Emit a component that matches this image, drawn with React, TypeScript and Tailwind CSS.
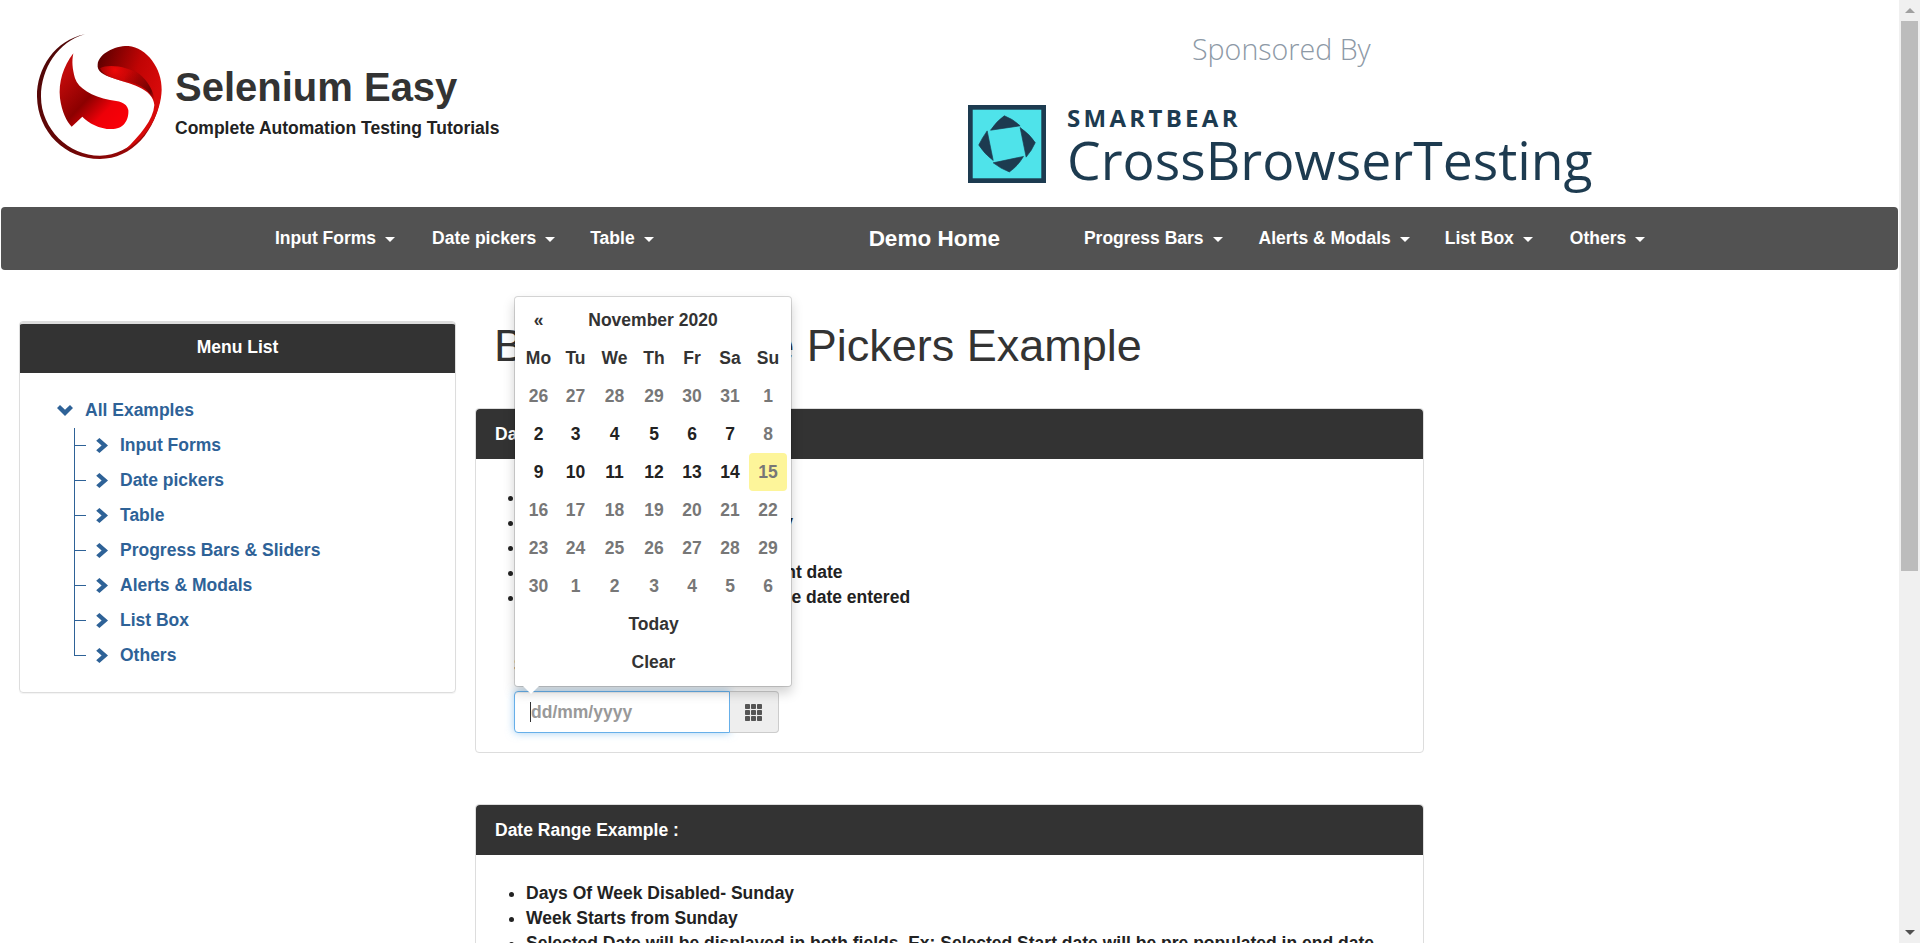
const navLeft = [
  { label: "Input Forms", cls: "ml-[259px]" },
  { label: "Date pickers", cls: "ml-[7px]" },
  { label: "Table", cls: "ml-[5px]" },
];
const navRight = [
  { label: "Progress Bars", cls: "ml-[54px]" },
  { label: "Alerts & Modals", cls: "ml-[6px]" },
  { label: "List Box", cls: "ml-[5px]" },
  { label: "Others", cls: "ml-[7px]" },
];
const tree = [
  { label: "Input Forms", cls: "ml-[1px]" },
  { label: "Date pickers", cls: "ml-[1px]" },
  { label: "Table", cls: "ml-[2px]" },
  { label: "Progress Bars & Sliders", cls: "ml-[1px]" },
  { label: "Alerts & Modals", cls: "" },
  { label: "List Box", cls: "ml-[1px]" },
  { label: "Others", cls: "ml-[1px]" },
];
const dow = ["Mo", "Tu", "We", "Th", "Fr", "Sa", "Su"];
const days: { d: number; on?: boolean; today?: boolean }[] = [
  ...[26, 27, 28, 29, 30, 31, 1].map((d) => ({ d })),
  ...[2, 3, 4, 5, 6, 7].map((d) => ({ d, on: true })),
  { d: 8 },
  ...[9, 10, 11, 12, 13, 14].map((d) => ({ d, on: true })),
  { d: 15, today: true },
  ...[16, 17, 18, 19, 20, 21, 22, 23, 24, 25, 26, 27, 28, 29, 30, 1, 2, 3, 4, 5, 6].map((d) => ({ d })),
];

function Caret() {
  return <span className="ml-[9px] inline-block h-0 w-0 border-x-[5px] border-t-[5px] border-x-transparent border-t-white align-middle" />;
}
function ChevronRight() {
  return (
    <svg width="12" height="15" viewBox="0 0 12 15" className="shrink-0 fill-[#2e6297]">
      <path d="M3.4 0 L12 7.5 L3.4 15 L0.2 12.2 L5.6 7.5 L0.2 2.8 Z" />
    </svg>
  );
}
function ChevronDown() {
  return (
    <svg width="16" height="11" viewBox="0 0 16 11" className="shrink-0 fill-[#2e6297]">
      <path d="M0 3 L3 0 L8 4.8 L13 0 L16 3 L8 11 Z" />
    </svg>
  );
}
function Logo() {
  return (
    <svg width="150" height="145" viewBox="0 0 450 435" className="shrink-0">
      <defs>
        <linearGradient id="ring" x1="0" y1="0" x2="1" y2="1">
          <stop offset="0" stopColor="#4a0808" />
          <stop offset="0.6" stopColor="#6a0606" />
          <stop offset="1" stopColor="#b80808" />
        </linearGradient>
        <linearGradient id="top" gradientUnits="userSpaceOnUse" x1="218" y1="100" x2="410" y2="170">
          <stop offset="0" stopColor="#5c0000" />
          <stop offset="0.3" stopColor="#8e0202" />
          <stop offset="0.6" stopColor="#c00404" />
          <stop offset="1" stopColor="#d80a0a" />
        </linearGradient>
        <radialGradient id="topGlow" gradientUnits="userSpaceOnUse" cx="270" cy="135" r="75">
          <stop offset="0" stopColor="#f00808" />
          <stop offset="1" stopColor="#f00808" stopOpacity="0" />
        </radialGradient>
        <linearGradient id="topShade" gradientUnits="userSpaceOnUse" x1="300" y1="150" x2="390" y2="220">
          <stop offset="0" stopColor="#6a0000" stopOpacity="0" />
          <stop offset="0.8" stopColor="#600000" stopOpacity="0.9" />
          <stop offset="1" stopColor="#600000" stopOpacity="0" />
        </linearGradient>
        <linearGradient id="low" gradientUnits="userSpaceOnUse" x1="110" y1="160" x2="270" y2="310">
          <stop offset="0" stopColor="#c00a0a" />
          <stop offset="0.45" stopColor="#8c0000" />
          <stop offset="0.75" stopColor="#ee0008" />
          <stop offset="1" stopColor="#f80008" />
        </linearGradient>
      </defs>
      <path fill="url(#ring)" d="M180 28 C90 45 35 130 36 215 C38 320 120 402 225 402 C320 402 395 320 408 205 C395 300 320 392 225 392 C130 392 48 310 48 215 C48 130 100 50 180 28 Z" />
      <path fill="url(#top)" d="M218 118 C222 85 270 62 310 63 C365 68 412 130 410 195 C408 260 370 340 300 375 C345 330 385 285 388 240 C385 190 310 175 265 160 C235 150 215 140 218 118 Z" />
      <path fill="url(#topGlow)" d="M225 130 C250 115 310 125 350 150 C375 170 388 200 388 240 C385 190 310 175 265 160 C245 153 232 145 225 130 Z" />
      <path fill="url(#topShade)" d="M300 125 C350 140 385 180 392 240 L388 240 C385 200 345 175 300 168 Z" />
      <path fill="url(#low)" d="M145 85 C115 125 100 170 105 220 C110 260 125 290 140 305 L172 275 C190 295 230 315 265 312 C300 310 312 280 310 255 C305 232 280 228 255 225 C200 215 160 190 150 160 C142 130 140 110 145 85 Z" />
    </svg>
  );
}
function CbtIcon() {
  return (
    <svg width="78" height="78" viewBox="0 0 232 232" className="shrink-0">
      <rect x="7" y="7" width="218" height="218" fill="#4fe3ea" stroke="#1d3b50" strokeWidth="14" />
      <g fill="#1d3b50" stroke="#1d3b50" strokeWidth="2" strokeLinejoin="round">
        <path d="M67 75 Q85 48 108 32 Q135 42 155 62 Z" />
        <path d="M155 67 Q185 88 200 112 Q190 135 173 155 Z" />
        <path d="M75 172 L165 153 Q148 182 123 199 Q98 190 75 172 Z" />
        <path d="M57 77 L75 165 Q48 145 32 119 Q42 98 57 77 Z" />
      </g>
    </svg>
  );
}
function ThIcon() {
  return (
    <svg width="17" height="17" viewBox="0 0 17 17" className="fill-[#555]">
      {[0, 6, 12].map((y) =>
        [0, 6, 12].map((x) => <rect key={`${x}-${y}`} x={x} y={y} width="5" height="5" rx="0.8" />)
      )}
    </svg>
  );
}
function PanelHead({ children }: { children: React.ReactNode }) {
  return <div className="flex h-[50px] items-center rounded-t-[4px] bg-[#333] pl-[19px] font-bold text-white">{children}</div>;
}

function Calendar() {
  const cols = "grid grid-cols-[37px_37px_41px_38px_38px_38px_38px]";
  return (
    <div className="absolute bottom-[46px] left-0 z-10 w-[278px] rounded-[4px] border border-black/15 bg-white bg-clip-padding pb-[5px] pl-[5px] pr-[4px] pt-[4px] font-bold text-[#333] shadow-[0_6px_12px_rgba(0,0,0,0.175)]">
      <div className={cols}>
        <div className="flex h-[38px] items-center justify-center">«</div>
        <div className="col-span-5 flex h-[38px] items-center justify-center">November 2020</div>
        <div />
        {dow.map((d) => (
          <div key={d} className="flex h-[38px] items-center justify-center">{d}</div>
        ))}
        {days.map((c, i) => (
          <div
            key={i}
            className={
              "flex h-[38px] items-center justify-center rounded-[4px] " +
              (c.today ? "bg-[#fdf59a] text-[#777]" : c.on ? "text-[#222]" : "text-[#777]")
            }
          >
            {c.d}
          </div>
        ))}
      </div>
      <div className="flex h-[38px] items-center justify-center">Today</div>
      <div className="flex h-[38px] items-center justify-center">Clear</div>
      <div className="absolute -bottom-[8px] left-[8px] h-0 w-0 border-x-[8px] border-t-[8px] border-x-transparent border-t-white" />
    </div>
  );
}

export default function App() {
  return (
    <div className="flex h-[943px] overflow-hidden bg-white font-['Liberation_Sans',Arial,sans-serif] text-[17.5px] leading-[25px] text-[#333]">
      <div className="min-w-0 flex-1">
        <header className="flex h-[207px]">
          <div className="flex w-[960px] items-start pl-[25px] pt-[25px]">
            <Logo />
            <div className="pt-[37px]">
              <div className="text-[40px] font-bold leading-[50px]">Selenium Easy</div>
              <div className="mt-[4px] font-bold text-[#222]">Complete Automation Testing Tutorials</div>
            </div>
          </div>
          <div className="pl-[8px]">
            <div className="pl-[224px] pt-[28px] font-['Open_Sans',sans-serif] text-[28.6px] font-light leading-[42px] text-[#8d99a6]">Sponsored By</div>
            <div className="mt-[35px] flex">
              <CbtIcon />
              <div className="pl-[21px] font-['Open_Sans',sans-serif] text-[#1d3b50]">
                <div className="-mt-[2px] text-[24px] font-bold leading-[30px] tracking-[3.3px]">SMARTBEAR</div>
                <div className="mt-[-5px] text-[53.5px] leading-[64px]">CrossBrowserTesting</div>
              </div>
            </div>
          </div>
        </header>

        <nav className="mx-[1px] flex h-[63px] items-center rounded-[4px] bg-[#525252] font-bold text-white">
          {navLeft.map((n) => (
            <a key={n.label} className={"whitespace-nowrap p-[15px] " + n.cls}>
              {n.label}
              <Caret />
            </a>
          ))}
          <a className="ml-[185px] whitespace-nowrap p-[15px] text-[22.5px]">Demo Home</a>
          {navRight.map((n) => (
            <a key={n.label} className={"whitespace-nowrap p-[15px] " + n.cls}>
              {n.label}
              <Caret />
            </a>
          ))}
        </nav>

        <div className="flex items-start pl-[19px]">
          <aside className="mt-[51px] w-[437px] rounded-[4px] border border-[#ddd] shadow-[0_1px_1px_rgba(0,0,0,0.05)]">
            <div className="flex h-[51px] items-center justify-center rounded-t-[3px] border-t-[2px] border-[#ddd] bg-[#333] pb-[2px] font-bold text-white">Menu List</div>
            <div className="pb-[19px] pl-[37px] pt-[20px] font-bold text-[#2e6297]">
              <div className="flex h-[35px] items-center gap-[12px]">
                <ChevronDown />
                <span>All Examples</span>
              </div>
              <div className="ml-[17px]">
                {tree.map((t, i) => (
                  <div key={t.label} className="flex h-[35px] items-center">
                    <span className="flex h-full w-[12px] flex-col">
                      <span className="h-[18px] w-full border-b border-l border-[#2e6297]" />
                      <span className={"w-full flex-1 border-[#2e6297] " + (i < tree.length - 1 ? "border-l" : "")} />
                    </span>
                    <span className="ml-[10px]"><ChevronRight /></span>
                    <span className={"ml-[12px] whitespace-nowrap " + t.cls}>{t.label}</span>
                  </div>
                ))}
              </div>
            </div>
          </aside>

          <main className="ml-[19px] w-[949px]">
            <h1 className="mt-[46px] pl-[19px] text-[45px] font-normal leading-[60px]">Bootstrap Date Pickers Example</h1>
            <section className="mt-[32px] rounded-[4px] border border-[#ddd]">
              <PanelHead>Date Example :</PanelHead>
              <div className="h-[293px] pt-[26px] font-bold text-[#222]">
                <ul className="list-disc pl-[49px]">
                  <li>Date format- dd/mm/yyyy</li>
                  <li>Days Of Week Disabled- Sunday</li>
                  <li>Week Starts from Monday</li>
                  <li>Today button to show the current date</li>
                  <li>Use this Clear Button to clear the date entered</li>
                </ul>
                <div className="ml-[38px] mt-[43px] font-bold">Select Date :</div>
                <div className="relative ml-[38px] mt-[13px] flex h-[42px] w-[265px]">
                  <div className="flex w-[216px] items-center rounded-l-[4px] border border-[#66afe9] bg-white pl-[15px] font-bold text-[#999] shadow-[inset_0_1px_1px_rgba(0,0,0,0.075),0_0_8px_rgba(102,175,233,0.6)]">
                    <span className="h-[20px] w-px bg-[#333]" />
                    dd/mm/yyyy
                  </div>
                  <div className="flex w-[49px] items-center justify-center rounded-r-[4px] border border-l-0 border-[#ccc] bg-[#eee] pr-[2px]">
                    <ThIcon />
                  </div>
                  <Calendar />
                </div>
              </div>
            </section>
            <section className="mt-[51px] rounded-[4px] border border-[#ddd]">
              <PanelHead>Date Range Example :</PanelHead>
              <div className="pt-[26px] font-bold text-[#222]">
                <ul className="list-disc pl-[50px]">
                  <li>Days Of Week Disabled- Sunday</li>
                  <li>Week Starts from Sunday</li>
                  <li>Selected Date will be displayed in both fields. Ex: Selected Start date will be pre populated in end date</li>
                </ul>
              </div>
            </section>
          </main>
        </div>
      </div>

      <div className="flex h-[943px] w-[21px] shrink-0 flex-col items-center bg-[#f0f0f0]">
        <div className="flex h-[21px] items-center justify-center">
          <div className="h-0 w-0 border-x-[5px] border-b-[5px] border-x-transparent border-b-[#a0a0a0]" />
        </div>
        <div className="h-[550px] w-[17px] bg-[#bcbcbc]" />
        <div className="flex-1" />
        <div className="flex h-[21px] items-center justify-center">
          <div className="h-0 w-0 border-x-[5px] border-t-[5px] border-x-transparent border-t-[#505050]" />
        </div>
      </div>
    </div>
  );
}
